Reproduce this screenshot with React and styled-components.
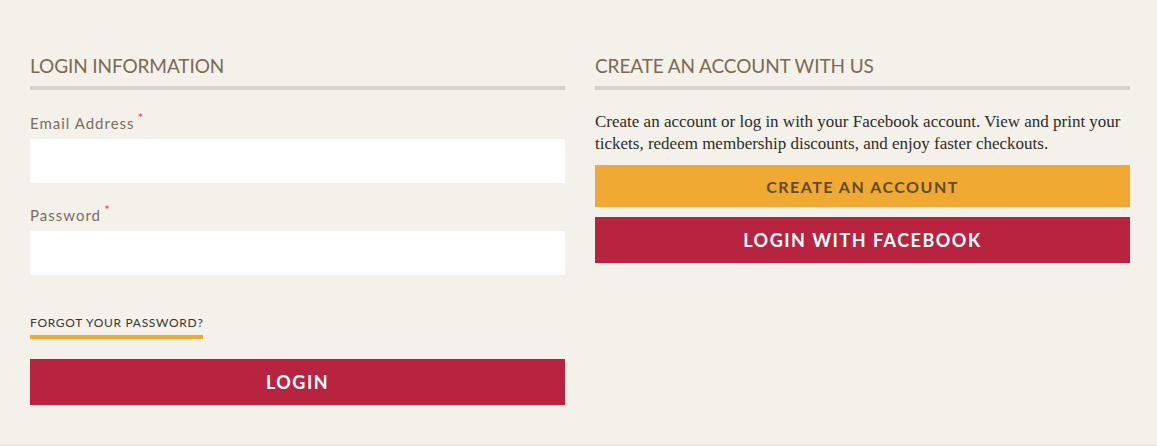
import React from "react";
import styled, { createGlobalStyle } from "styled-components";

const GlobalStyle = createGlobalStyle`
  html, body {
    margin: 0;
    padding: 0;
    background: #f4f1eb;
  }
  * { box-sizing: border-box; }
`;

const Page = styled.div`
  height: 446px;
  border-bottom: 1px solid #e2ded8;
  padding: 54px 27px 0 30px;
  font-family: "Lato", "Noto Sans", sans-serif;
`;

const Columns = styled.div`
  display: grid;
  grid-template-columns: 535px 535px;
  column-gap: 30px;
  align-items: start;
`;

const Column = styled.section`
  display: flex;
  flex-direction: column;
`;

const Heading = styled.h2`
  margin: 0;
  font-family: "Lato", sans-serif;
  font-weight: 400;
  font-size: 19px;
  line-height: 24px;
  letter-spacing: -0.1px;
  color: #7b6b55;
  padding-bottom: 8px;
  border-bottom: 4px solid #d9d4cb;
`;

const Label = styled.label`
  display: block;
  margin-top: ${(p) => p.$top}px;
  font-size: 15px;
  line-height: 20px;
  letter-spacing: 1px;
  color: #7b6d5d;
`;

const Star = styled.sup`
  color: #d9566b;
  font-size: 14px;
  margin-left: 3px;
  vertical-align: 6px;
  line-height: 0;
`;

const Input = styled.input`
  display: block;
  width: 100%;
  height: 44px;
  margin-top: 6px;
  border: none;
  outline: none;
  background: #ffffff;
  padding: 0 12px;
  font-size: 15px;
`;

const ForgotRow = styled.div`
  margin-top: 40px;
  display: flex;
`;

const ForgotLink = styled.a`
  font-size: 12px;
  line-height: 16px;
  letter-spacing: 0.7px;
  color: #3a3631;
  text-decoration: none;
  padding-bottom: 4px;
  border-bottom: 4px solid #efa830;
`;

const Button = styled.button`
  display: block;
  width: 100%;
  height: ${(p) => p.$h}px;
  margin-top: ${(p) => p.$top}px;
  border: none;
  background: ${(p) => (p.$variant === "gold" ? "#f0a932" : "#b8243f")};
  color: ${(p) => (p.$variant === "gold" ? "#5f4b2d" : "#ffffff")};
  font-family: "Lato", sans-serif;
  font-weight: 700;
  font-size: ${(p) => p.$size}px;
  letter-spacing: 1.5px;
  text-transform: uppercase;
  cursor: pointer;
`;

const Paragraph = styled.p`
  margin: 21px 0 0;
  font-family: "Liberation Serif", serif;
  font-size: 17px;
  line-height: 22px;
  color: #2f2c28;
`;

export default function App() {
  return (
    <>
      <GlobalStyle />
      <Page>
        <Columns>
          <Column>
            <Heading>LOGIN INFORMATION</Heading>
            <Label $top={23}>
              Email Address<Star>*</Star>
            </Label>
            <Input type="email" />
            <Label $top={22}>
              Password<Star>*</Star>
            </Label>
            <Input type="password" />
            <ForgotRow>
              <ForgotLink href="#">FORGOT YOUR PASSWORD?</ForgotLink>
            </ForgotRow>
            <Button $h={46} $top={20} $size={18}>
              Login
            </Button>
          </Column>
          <Column>
            <Heading>CREATE AN ACCOUNT WITH US</Heading>
            <Paragraph>
              Create an account or log in with your Facebook account. View and print your
              tickets, redeem membership discounts, and enjoy faster checkouts.
            </Paragraph>
            <Button $variant="gold" $h={42} $top={10} $size={16}>
              Create an account
            </Button>
            <Button $h={46} $top={10} $size={18}>
              Login with Facebook
            </Button>
          </Column>
        </Columns>
      </Page>
    </>
  );
}
